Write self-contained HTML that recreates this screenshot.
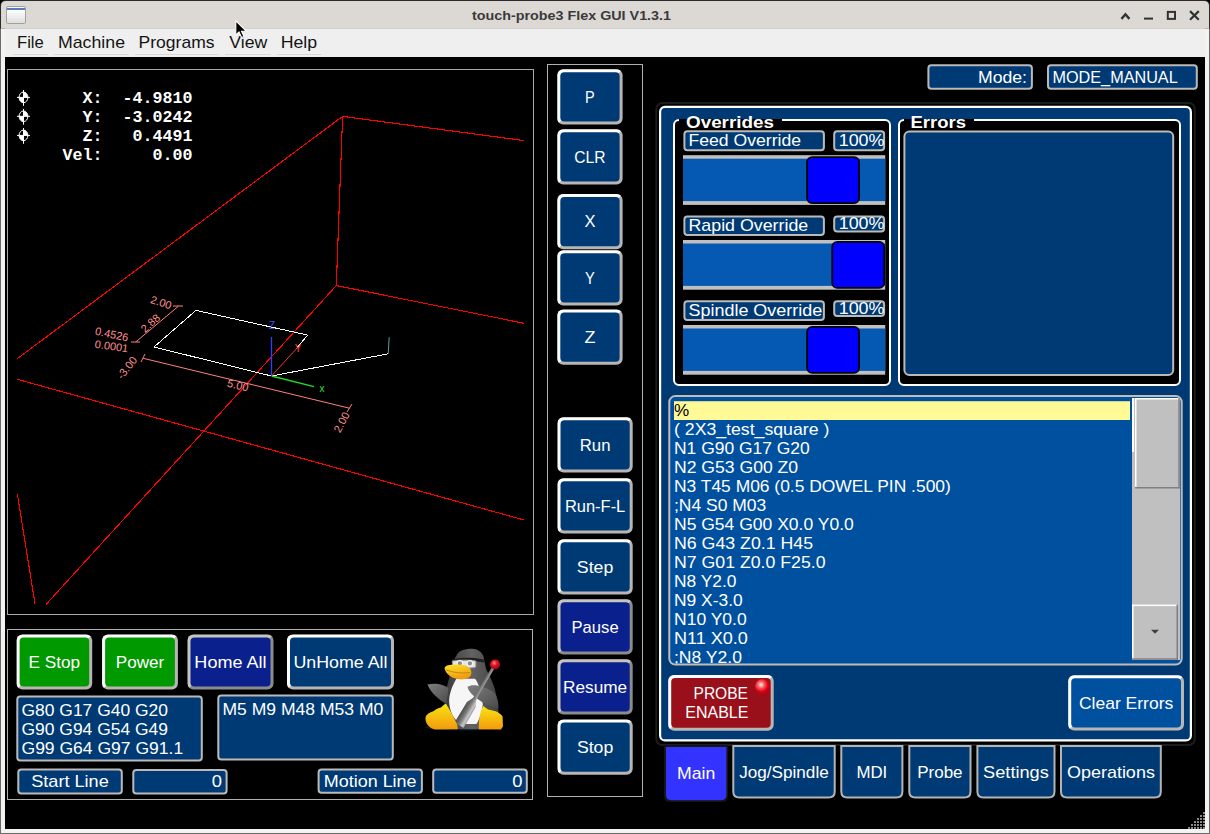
<!DOCTYPE html>
<html><head><meta charset="utf-8"><style>
html,body{margin:0;padding:0;background:#000;overflow:hidden;}
svg{display:block;}
</style></head><body>
<svg width="1210" height="834" viewBox="0 0 1210 834" font-family="Liberation Sans">
<defs>
<linearGradient id="wig" x1="0" y1="0" x2="0" y2="1"><stop offset="0" stop-color="#ffffff"/><stop offset="1" stop-color="#dcdedc"/></linearGradient>
<clipPath id="pclip"><rect x="0" y="0" width="0" height="0"/></clipPath>
</defs>
<rect x="0" y="0" width="1210" height="834" fill="#000"/>
<rect x="0" y="28" width="1210" height="806" fill="#f4f3f2"/>
<rect x="5" y="57" width="1200" height="772" fill="#000"/>
<rect x="1209" y="28" width="1" height="806" fill="#6a6a6a"/>
<rect x="0" y="28" width="1" height="806" fill="#6a6a6a"/>
<rect x="0" y="833" width="1210" height="1" fill="#6a6a6a"/>
<path d="M0,6 Q0,0 6,0 L1204,0 Q1210,0 1210,6 L1210,28.5 L0,28.5 Z" fill="#2a2a2a"/>
<path d="M1,6 Q1,1 6,1 L1204,1 Q1209,1 1209,6 L1209,28.5 L1,28.5 Z" fill="#dcd8d4"/>
<rect x="5" y="28.5" width="1200" height="28.5" fill="#efefef"/>
<rect x="6.5" y="6.5" width="19" height="17" rx="1.5" fill="#f4f4f2" stroke="#a0a0a0" stroke-width="1"/>
<rect x="7" y="8" width="18" height="2" fill="#5a7fb8"/>
<rect x="7" y="10" width="18" height="13" fill="url(#wig)"/>
<text x="571.5" y="19.6" font-family="Liberation Sans" font-size="12.6" font-weight="bold" fill="#3a3a3a" text-anchor="middle" textLength="199.00" lengthAdjust="spacingAndGlyphs" >touch-probe3 Flex GUI V1.3.1</text>
<path d="M1122.2,18 L1125.4,14.3 L1128.6,18" fill="none" stroke="#2e3436" stroke-width="2.4" stroke-linecap="square"/>
<rect x="1144" y="17.6" width="9" height="2" fill="#2e3436"/>
<rect x="1167.8" y="11.9" width="7.2" height="7" fill="none" stroke="#2e3436" stroke-width="2"/>
<path d="M1190.8,11.9 L1198,19 M1198,11.9 L1190.8,19" fill="none" stroke="#2e3436" stroke-width="2.2" stroke-linecap="square"/>
<text x="17" y="47.8" font-family="Liberation Sans" font-size="17.0" font-weight="normal" fill="#141414" text-anchor="start" textLength="26.80" lengthAdjust="spacingAndGlyphs" >File</text>
<rect x="13" y="54" width="35" height="1" fill="#d8d8d8"/>
<text x="58" y="47.8" font-family="Liberation Sans" font-size="17.0" font-weight="normal" fill="#141414" text-anchor="start" textLength="67.00" lengthAdjust="spacingAndGlyphs" >Machine</text>
<rect x="54" y="54" width="74.5" height="1" fill="#d8d8d8"/>
<text x="138.6" y="47.8" font-family="Liberation Sans" font-size="17.0" font-weight="normal" fill="#141414" text-anchor="start" textLength="75.89" lengthAdjust="spacingAndGlyphs" >Programs</text>
<rect x="135" y="54" width="83.5" height="1" fill="#d8d8d8"/>
<text x="229.3" y="47.8" font-family="Liberation Sans" font-size="17.0" font-weight="normal" fill="#141414" text-anchor="start" textLength="38.00" lengthAdjust="spacingAndGlyphs" >View</text>
<rect x="225" y="54" width="45.5" height="1" fill="#d8d8d8"/>
<text x="280.7" y="47.8" font-family="Liberation Sans" font-size="17.0" font-weight="normal" fill="#141414" text-anchor="start" textLength="36.48" lengthAdjust="spacingAndGlyphs" >Help</text>
<rect x="277" y="54" width="44.5" height="1" fill="#d8d8d8"/>
<rect x="7.5" y="69.5" width="526" height="545" fill="#000" stroke="#a8a8a8" stroke-width="1"/>
<line x1="17.3" y1="358.6" x2="342.6" y2="116.4" stroke="#ff0000" stroke-width="1.1" shape-rendering="crispEdges"/>
<line x1="342.6" y1="116.4" x2="524.2" y2="140.6" stroke="#ff0000" stroke-width="1.1" shape-rendering="crispEdges"/>
<line x1="342.6" y1="116.4" x2="336.3" y2="285.6" stroke="#ff0000" stroke-width="1.1" shape-rendering="crispEdges"/>
<line x1="336.3" y1="285.6" x2="524.2" y2="323.3" stroke="#ff0000" stroke-width="1.1" shape-rendering="crispEdges"/>
<line x1="46" y1="604.5" x2="336.3" y2="285.6" stroke="#ff0000" stroke-width="1.1" shape-rendering="crispEdges"/>
<line x1="17.3" y1="379.3" x2="524" y2="520" stroke="#ff0000" stroke-width="1.1" shape-rendering="crispEdges"/>
<line x1="17.3" y1="493.7" x2="35.1" y2="604.5" stroke="#ff0000" stroke-width="1.1" shape-rendering="crispEdges"/>
<polyline points="271.5,376 154,347 195.9,310.4 307.6,335.1 296,349" fill="none" stroke="#ffffff" stroke-width="1" shape-rendering="crispEdges"/>
<polyline points="271.5,376 388.2,353.8" fill="none" stroke="#ffffff" stroke-width="1" shape-rendering="crispEdges"/>
<polyline points="388.2,353.8 389.2,337.3" fill="none" stroke="#6a9a9a" stroke-width="1"/>
<line x1="271.5" y1="376" x2="298" y2="347" stroke="#ff3030" stroke-width="1"/>
<line x1="271.5" y1="376" x2="314" y2="386.7" stroke="#20e020" stroke-width="1.3"/>
<line x1="271.5" y1="376" x2="271.5" y2="337" stroke="#3040ff" stroke-width="1.3"/>
<line x1="143.2" y1="358.3" x2="349.5" y2="408.2" stroke="#ff8080" stroke-width="1"/>
<line x1="141" y1="362" x2="145" y2="354" stroke="#ff8080" stroke-width="1"/>
<line x1="347" y1="412" x2="352" y2="404" stroke="#ff8080" stroke-width="1"/>
<line x1="135.8" y1="341.9" x2="178.4" y2="306.2" stroke="#ff8080" stroke-width="1"/>
<line x1="131" y1="342" x2="140" y2="342" stroke="#ff8080" stroke-width="1"/>
<line x1="173" y1="306" x2="183" y2="306" stroke="#ff8080" stroke-width="1"/>
<g font-family="Liberation Sans" font-size="11" fill="#ff9090">
<text x="237" y="389" transform="rotate(14 237 389)" text-anchor="middle">5.00</text>
<text x="345" y="424" transform="rotate(-62 345 424)" text-anchor="middle">2.00</text>
<text x="160" y="306" transform="rotate(18 160 306)" text-anchor="middle">2.00</text>
<text x="153" y="326" transform="rotate(-42 153 326)" text-anchor="middle">2.88</text>
<text x="130" y="370" transform="rotate(-52 130 370)" text-anchor="middle">-3.00</text>
<text x="111" y="338" transform="rotate(12 111 338)" text-anchor="middle">0.4526</text>
<text x="111" y="350" transform="rotate(8 111 350)" text-anchor="middle">0.0001</text>
</g>
<g font-family="Liberation Sans" font-size="10">
<text x="272" y="329" fill="#4050ff" text-anchor="middle">Z</text>
<text x="322" y="392" fill="#30e030" text-anchor="middle">x</text>
<text x="298" y="352" fill="#ff4040" text-anchor="middle">Y</text>
</g>
<text x="62.5" y="103" font-family="Liberation Mono" font-size="16.8" font-weight="bold" fill="#fff" textLength="130" lengthAdjust="spacingAndGlyphs" xml:space="preserve">  X:  -4.9810</text>
<text x="62.5" y="121.8" font-family="Liberation Mono" font-size="16.8" font-weight="bold" fill="#fff" textLength="130" lengthAdjust="spacingAndGlyphs" xml:space="preserve">  Y:  -3.0242</text>
<text x="62.5" y="140.7" font-family="Liberation Mono" font-size="16.8" font-weight="bold" fill="#fff" textLength="130" lengthAdjust="spacingAndGlyphs" xml:space="preserve">  Z:   0.4491</text>
<text x="62.5" y="159.5" font-family="Liberation Mono" font-size="16.8" font-weight="bold" fill="#fff" textLength="130" lengthAdjust="spacingAndGlyphs" xml:space="preserve">Vel:     0.00</text>
<g transform="translate(23.5 97.4)"><ellipse cx="0" cy="0" rx="4.4" ry="5.3" fill="none" stroke="#fff" stroke-width="1"/><path d="M0,0 L0,-5.3 A4.4,5.3 0 0 1 4.4,0 Z M0,0 L0,5.3 A4.4,5.3 0 0 1 -4.4,0 Z" fill="#fff"/><path d="M-6.5,0 H6.5 M0,-7.4 V8.4" stroke="#fff" stroke-width="1"/></g>
<g transform="translate(23.5 116.3)"><ellipse cx="0" cy="0" rx="4.4" ry="5.3" fill="none" stroke="#fff" stroke-width="1"/><path d="M0,0 L0,-5.3 A4.4,5.3 0 0 1 4.4,0 Z M0,0 L0,5.3 A4.4,5.3 0 0 1 -4.4,0 Z" fill="#fff"/><path d="M-6.5,0 H6.5 M0,-7.4 V8.4" stroke="#fff" stroke-width="1"/></g>
<g transform="translate(23.5 135.4)"><ellipse cx="0" cy="0" rx="4.4" ry="5.3" fill="none" stroke="#fff" stroke-width="1"/><path d="M0,0 L0,-5.3 A4.4,5.3 0 0 1 4.4,0 Z M0,0 L0,5.3 A4.4,5.3 0 0 1 -4.4,0 Z" fill="#fff"/><path d="M-6.5,0 H6.5 M0,-7.4 V8.4" stroke="#fff" stroke-width="1"/></g>
<rect x="7.5" y="629.5" width="525" height="170" fill="none" stroke="#b0b0b0" stroke-width="1"/>
<rect x="16.6" y="634.5" width="75.6" height="55" rx="6" fill="#b8b6b4"/>
<clipPath id="c1"><polygon points="16.6,634.5 92.19999999999999,634.5 64.69999999999999,662.0 44.1,662.0 16.6,689.5"/></clipPath>
<rect x="16.6" y="634.5" width="75.6" height="55" rx="6" fill="#ffffff" clip-path="url(#c1)"/>
<rect x="19.6" y="637.5" width="69.6" height="49" rx="4" fill="#009900"/>
<text x="54.4" y="667.8" font-family="Liberation Sans" font-size="17.0" font-weight="normal" fill="#fff" text-anchor="middle" textLength="51.59" lengthAdjust="spacingAndGlyphs" >E Stop</text>
<rect x="102.1" y="634.5" width="75.8" height="55" rx="6" fill="#b8b6b4"/>
<clipPath id="c2"><polygon points="102.1,634.5 177.89999999999998,634.5 150.39999999999998,662.0 129.6,662.0 102.1,689.5"/></clipPath>
<rect x="102.1" y="634.5" width="75.8" height="55" rx="6" fill="#ffffff" clip-path="url(#c2)"/>
<rect x="105.1" y="637.5" width="69.8" height="49" rx="4" fill="#009900"/>
<text x="140.0" y="667.8" font-family="Liberation Sans" font-size="17.0" font-weight="normal" fill="#fff" text-anchor="middle" textLength="48.41" lengthAdjust="spacingAndGlyphs" >Power</text>
<rect x="187.5" y="634.5" width="86" height="55" rx="6" fill="#8c8c8c"/>
<clipPath id="c3"><polygon points="187.5,634.5 273.5,634.5 246.0,662.0 215.0,662.0 187.5,689.5"/></clipPath>
<rect x="187.5" y="634.5" width="86" height="55" rx="6" fill="#c8c4c0" clip-path="url(#c3)"/>
<rect x="190.5" y="637.5" width="80" height="49" rx="4" fill="#0a208c"/>
<text x="230.5" y="667.8" font-family="Liberation Sans" font-size="17.0" font-weight="normal" fill="#fff" text-anchor="middle" textLength="72.22" lengthAdjust="spacingAndGlyphs" >Home All</text>
<rect x="287" y="634.5" width="107" height="55" rx="6" fill="#b8b6b4"/>
<clipPath id="c4"><polygon points="287,634.5 394,634.5 366.5,662.0 314.5,662.0 287,689.5"/></clipPath>
<rect x="287" y="634.5" width="107" height="55" rx="6" fill="#ffffff" clip-path="url(#c4)"/>
<rect x="290" y="637.5" width="101" height="49" rx="4" fill="#003a74"/>
<text x="340.5" y="667.8" font-family="Liberation Sans" font-size="17.0" font-weight="normal" fill="#fff" text-anchor="middle" textLength="94.08" lengthAdjust="spacingAndGlyphs" >UnHome All</text>
<rect x="17.3" y="696.5" width="184.5" height="64" rx="3" fill="#003a74" stroke="#bcbab8" stroke-width="2"/>
<text x="21.5" y="715.7" font-family="Liberation Sans" font-size="17.0" font-weight="normal" fill="#fff" text-anchor="start" textLength="146.41" lengthAdjust="spacingAndGlyphs" >G80 G17 G40 G20</text>
<text x="21.5" y="734.7" font-family="Liberation Sans" font-size="17.0" font-weight="normal" fill="#fff" text-anchor="start" textLength="146.41" lengthAdjust="spacingAndGlyphs" >G90 G94 G54 G49</text>
<text x="21.5" y="753.7" font-family="Liberation Sans" font-size="17.0" font-weight="normal" fill="#fff" text-anchor="start" textLength="161.69" lengthAdjust="spacingAndGlyphs" >G99 G64 G97 G91.1</text>
<rect x="218.3" y="695.5" width="174.5" height="64" rx="3" fill="#003a74" stroke="#bcbab8" stroke-width="2"/>
<text x="222.5" y="715.3" font-family="Liberation Sans" font-size="17.0" font-weight="normal" fill="#fff" text-anchor="start" textLength="160.75" lengthAdjust="spacingAndGlyphs" >M5 M9 M48 M53 M0</text>
<rect x="18.3" y="769.5" width="103.5" height="24" rx="3" fill="#003a74" stroke="#bcbab8" stroke-width="2"/>
<text x="70" y="786.6" font-family="Liberation Sans" font-size="17.0" font-weight="normal" fill="#fff" text-anchor="middle" textLength="77.56" lengthAdjust="spacingAndGlyphs" >Start Line</text>
<rect x="133.3" y="770.0" width="93.3" height="23.5" rx="3" fill="#003a74" stroke="#bcbab8" stroke-width="2"/>
<text x="222" y="786.6" font-family="Liberation Sans" font-size="17.0" font-weight="normal" fill="#fff" text-anchor="end" textLength="10.19" lengthAdjust="spacingAndGlyphs" >0</text>
<rect x="318.6" y="769.5" width="103.3" height="23.3" rx="3" fill="#003a74" stroke="#bcbab8" stroke-width="2"/>
<text x="370.2" y="786.6" font-family="Liberation Sans" font-size="17.0" font-weight="normal" fill="#fff" text-anchor="middle" textLength="92.73" lengthAdjust="spacingAndGlyphs" >Motion Line</text>
<rect x="433.2" y="769.5" width="93.6" height="23.3" rx="3" fill="#003a74" stroke="#bcbab8" stroke-width="2"/>
<text x="522.5" y="786.6" font-family="Liberation Sans" font-size="17.0" font-weight="normal" fill="#fff" text-anchor="end" textLength="10.19" lengthAdjust="spacingAndGlyphs" >0</text>
<rect x="547.5" y="64.5" width="95" height="732" fill="none" stroke="#b0b0b0" stroke-width="1"/>
<rect x="557.3" y="69.3" width="65.3" height="55.2" rx="6" fill="#b8b6b4"/>
<clipPath id="c5"><polygon points="557.3,69.3 622.5999999999999,69.3 594.9999999999999,96.9 584.9,96.9 557.3,124.5"/></clipPath>
<rect x="557.3" y="69.3" width="65.3" height="55.2" rx="6" fill="#ffffff" clip-path="url(#c5)"/>
<rect x="560.3" y="72.3" width="59.3" height="49.2" rx="4" fill="#003a74"/>
<text x="589.9499999999999" y="102.7" font-family="Liberation Sans" font-size="17.0" font-weight="normal" fill="#fff" text-anchor="middle" textLength="9.66" lengthAdjust="spacingAndGlyphs" >P</text>
<rect x="557.3" y="129.2" width="65.3" height="55.2" rx="6" fill="#b8b6b4"/>
<clipPath id="c6"><polygon points="557.3,129.2 622.5999999999999,129.2 594.9999999999999,156.79999999999998 584.9,156.79999999999998 557.3,184.39999999999998"/></clipPath>
<rect x="557.3" y="129.2" width="65.3" height="55.2" rx="6" fill="#ffffff" clip-path="url(#c6)"/>
<rect x="560.3" y="132.2" width="59.3" height="49.2" rx="4" fill="#003a74"/>
<text x="589.9499999999999" y="162.6" font-family="Liberation Sans" font-size="17.0" font-weight="normal" fill="#fff" text-anchor="middle" textLength="31.22" lengthAdjust="spacingAndGlyphs" >CLR</text>
<rect x="557.3" y="194" width="65.3" height="55.2" rx="6" fill="#b8b6b4"/>
<clipPath id="c7"><polygon points="557.3,194 622.5999999999999,194 594.9999999999999,221.6 584.9,221.6 557.3,249.2"/></clipPath>
<rect x="557.3" y="194" width="65.3" height="55.2" rx="6" fill="#ffffff" clip-path="url(#c7)"/>
<rect x="560.3" y="197" width="59.3" height="49.2" rx="4" fill="#003a74"/>
<text x="589.9499999999999" y="227.4" font-family="Liberation Sans" font-size="17.0" font-weight="normal" fill="#fff" text-anchor="middle" textLength="10.97" lengthAdjust="spacingAndGlyphs" >X</text>
<rect x="557.3" y="250.3" width="65.3" height="55.2" rx="6" fill="#b8b6b4"/>
<clipPath id="c8"><polygon points="557.3,250.3 622.5999999999999,250.3 594.9999999999999,277.90000000000003 584.9,277.90000000000003 557.3,305.5"/></clipPath>
<rect x="557.3" y="250.3" width="65.3" height="55.2" rx="6" fill="#ffffff" clip-path="url(#c8)"/>
<rect x="560.3" y="253.3" width="59.3" height="49.2" rx="4" fill="#003a74"/>
<text x="589.9499999999999" y="283.70000000000005" font-family="Liberation Sans" font-size="17.0" font-weight="normal" fill="#fff" text-anchor="middle" textLength="9.78" lengthAdjust="spacingAndGlyphs" >Y</text>
<rect x="557.3" y="309.5" width="65.3" height="55.2" rx="6" fill="#b8b6b4"/>
<clipPath id="c9"><polygon points="557.3,309.5 622.5999999999999,309.5 594.9999999999999,337.1 584.9,337.1 557.3,364.7"/></clipPath>
<rect x="557.3" y="309.5" width="65.3" height="55.2" rx="6" fill="#ffffff" clip-path="url(#c9)"/>
<rect x="560.3" y="312.5" width="59.3" height="49.2" rx="4" fill="#003a74"/>
<text x="589.9499999999999" y="342.90000000000003" font-family="Liberation Sans" font-size="17.0" font-weight="normal" fill="#fff" text-anchor="middle" textLength="10.97" lengthAdjust="spacingAndGlyphs" >Z</text>
<rect x="557.5" y="417.3" width="75.2" height="55.2" rx="6" fill="#b8b6b4"/>
<clipPath id="c10"><polygon points="557.5,417.3 632.7,417.3 605.1,444.90000000000003 585.1,444.90000000000003 557.5,472.5"/></clipPath>
<rect x="557.5" y="417.3" width="75.2" height="55.2" rx="6" fill="#ffffff" clip-path="url(#c10)"/>
<rect x="560.5" y="420.3" width="69.2" height="49.2" rx="4" fill="#003a74"/>
<text x="595.1" y="450.70000000000005" font-family="Liberation Sans" font-size="17.0" font-weight="normal" fill="#fff" text-anchor="middle" textLength="30.69" lengthAdjust="spacingAndGlyphs" >Run</text>
<rect x="557.5" y="478.3" width="75.2" height="55.2" rx="6" fill="#b8b6b4"/>
<clipPath id="c11"><polygon points="557.5,478.3 632.7,478.3 605.1,505.90000000000003 585.1,505.90000000000003 557.5,533.5"/></clipPath>
<rect x="557.5" y="478.3" width="75.2" height="55.2" rx="6" fill="#ffffff" clip-path="url(#c11)"/>
<rect x="560.5" y="481.3" width="69.2" height="49.2" rx="4" fill="#003a74"/>
<text x="595.1" y="511.70000000000005" font-family="Liberation Sans" font-size="17.0" font-weight="normal" fill="#fff" text-anchor="middle" textLength="60.38" lengthAdjust="spacingAndGlyphs" >Run-F-L</text>
<rect x="557.5" y="539.3" width="75.2" height="55.2" rx="6" fill="#b8b6b4"/>
<clipPath id="c12"><polygon points="557.5,539.3 632.7,539.3 605.1,566.9 585.1,566.9 557.5,594.5"/></clipPath>
<rect x="557.5" y="539.3" width="75.2" height="55.2" rx="6" fill="#ffffff" clip-path="url(#c12)"/>
<rect x="560.5" y="542.3" width="69.2" height="49.2" rx="4" fill="#003a74"/>
<text x="595.1" y="572.6999999999999" font-family="Liberation Sans" font-size="17.0" font-weight="normal" fill="#fff" text-anchor="middle" textLength="36.44" lengthAdjust="spacingAndGlyphs" >Step</text>
<rect x="557.5" y="599.3" width="75.2" height="55.2" rx="6" fill="#8c8c8c"/>
<clipPath id="c13"><polygon points="557.5,599.3 632.7,599.3 605.1,626.9 585.1,626.9 557.5,654.5"/></clipPath>
<rect x="557.5" y="599.3" width="75.2" height="55.2" rx="6" fill="#c8c4c0" clip-path="url(#c13)"/>
<rect x="560.5" y="602.3" width="69.2" height="49.2" rx="4" fill="#0a208c"/>
<text x="595.1" y="632.6999999999999" font-family="Liberation Sans" font-size="17.0" font-weight="normal" fill="#fff" text-anchor="middle" textLength="47.08" lengthAdjust="spacingAndGlyphs" >Pause</text>
<rect x="557.5" y="659.3" width="75.2" height="55.2" rx="6" fill="#8c8c8c"/>
<clipPath id="c14"><polygon points="557.5,659.3 632.7,659.3 605.1,686.9 585.1,686.9 557.5,714.5"/></clipPath>
<rect x="557.5" y="659.3" width="75.2" height="55.2" rx="6" fill="#c8c4c0" clip-path="url(#c14)"/>
<rect x="560.5" y="662.3" width="69.2" height="49.2" rx="4" fill="#0a208c"/>
<text x="595.1" y="692.6999999999999" font-family="Liberation Sans" font-size="17.0" font-weight="normal" fill="#fff" text-anchor="middle" textLength="64.17" lengthAdjust="spacingAndGlyphs" >Resume</text>
<rect x="557.5" y="719.5" width="75.2" height="55.2" rx="6" fill="#b8b6b4"/>
<clipPath id="c15"><polygon points="557.5,719.5 632.7,719.5 605.1,747.1 585.1,747.1 557.5,774.7"/></clipPath>
<rect x="557.5" y="719.5" width="75.2" height="55.2" rx="6" fill="#ffffff" clip-path="url(#c15)"/>
<rect x="560.5" y="722.5" width="69.2" height="49.2" rx="4" fill="#003a74"/>
<text x="595.1" y="752.9" font-family="Liberation Sans" font-size="17.0" font-weight="normal" fill="#fff" text-anchor="middle" textLength="36.39" lengthAdjust="spacingAndGlyphs" >Stop</text>
<rect x="928.4" y="65.3" width="103.5" height="23.5" rx="3" fill="#003a74" stroke="#bcbab8" stroke-width="2"/>
<text x="1027" y="83.2" font-family="Liberation Sans" font-size="17.0" font-weight="normal" fill="#fff" text-anchor="end" textLength="49.00" lengthAdjust="spacingAndGlyphs" >Mode:</text>
<rect x="1048.0" y="65.3" width="148.8" height="23.5" rx="3" fill="#003a74" stroke="#bcbab8" stroke-width="2"/>
<text x="1052.5" y="83.2" font-family="Liberation Sans" font-size="17.0" font-weight="normal" fill="#fff" text-anchor="start" textLength="125.17" lengthAdjust="spacingAndGlyphs" >MODE_MANUAL</text>
<rect x="656.3" y="103" width="538.5" height="642" rx="6" fill="none" stroke="#1c1c1c" stroke-width="2"/>
<rect x="660.1" y="106.9" width="530.8" height="833" rx="5" fill="#003a74" stroke="#fff" stroke-width="2.2" clip-path="url(#pclip)"/>
<rect x="660.1" y="106.9" width="530.8" height="633.5" rx="5" fill="#003a74" stroke="#fff" stroke-width="2.2"/>
<rect x="674" y="120" width="216" height="265" rx="5" fill="#000" stroke="#fff" stroke-width="2"/>
<rect x="679" y="118" width="103" height="4" fill="#000"/>
<rect x="679" y="110" width="103" height="9" fill="#003a74"/>
<text x="686" y="127.5" font-family="Liberation Sans" font-size="17" font-weight="bold" fill="#fff" text-anchor="start" textLength="88.00" lengthAdjust="spacingAndGlyphs" >Overrides</text>
<rect x="899" y="120" width="281" height="265" rx="5" fill="#000" stroke="#fff" stroke-width="2"/>
<rect x="904" y="118" width="70" height="4" fill="#000"/>
<rect x="904" y="110" width="70" height="9" fill="#003a74"/>
<text x="910.5" y="127.5" font-family="Liberation Sans" font-size="17" font-weight="bold" fill="#fff" text-anchor="start" textLength="55.50" lengthAdjust="spacingAndGlyphs" >Errors</text>
<rect x="904.4" y="131.6" width="268.8" height="243.4" rx="5" fill="#003a74" stroke="#bcbab8" stroke-width="2"/>
<rect x="684.4" y="131.2" width="139.5" height="19" rx="3" fill="#003a74" stroke="#bcbab8" stroke-width="2"/>
<text x="688.5" y="145.6" font-family="Liberation Sans" font-size="17.0" font-weight="normal" fill="#fff" text-anchor="start" textLength="112.50" lengthAdjust="spacingAndGlyphs" >Feed Override</text>
<rect x="834.2" y="131.2" width="49.9" height="19" rx="3" fill="#003a74" stroke="#bcbab8" stroke-width="2"/>
<text x="884.5" y="145.89999999999998" font-family="Liberation Sans" font-size="17.0" font-weight="normal" fill="#fff" text-anchor="end" textLength="45.77" lengthAdjust="spacingAndGlyphs" >100%</text>
<rect x="683" y="155.2" width="202.2" height="49.7" fill="#c0c0c0"/>
<rect x="683" y="158.7" width="202.2" height="42.4" fill="#0559b3"/>
<rect x="807.0999999999999" y="157.1" width="52" height="46" rx="5" fill="#0000ff" stroke="#000" stroke-width="1.8"/>
<rect x="684.4" y="216.6" width="139.5" height="18.3" rx="3" fill="#003a74" stroke="#bcbab8" stroke-width="2"/>
<text x="688.5" y="230.65" font-family="Liberation Sans" font-size="17.0" font-weight="normal" fill="#fff" text-anchor="start" textLength="119.69" lengthAdjust="spacingAndGlyphs" >Rapid Override</text>
<rect x="834.2" y="216.6" width="49.9" height="14.8" rx="3" fill="#003a74" stroke="#bcbab8" stroke-width="2"/>
<text x="884.5" y="229.2" font-family="Liberation Sans" font-size="17.0" font-weight="normal" fill="#fff" text-anchor="end" textLength="45.77" lengthAdjust="spacingAndGlyphs" >100%</text>
<rect x="683" y="240" width="202.2" height="49.7" fill="#c0c0c0"/>
<rect x="683" y="243.5" width="202.2" height="42.4" fill="#0559b3"/>
<rect x="832.1999999999999" y="241.9" width="52" height="46" rx="5" fill="#0000ff" stroke="#000" stroke-width="1.8"/>
<rect x="684.4" y="301.3" width="139.5" height="18.6" rx="3" fill="#003a74" stroke="#bcbab8" stroke-width="2"/>
<text x="688.5" y="315.5" font-family="Liberation Sans" font-size="17.0" font-weight="normal" fill="#fff" text-anchor="start" textLength="133.69" lengthAdjust="spacingAndGlyphs" >Spindle Override</text>
<rect x="834.2" y="301.3" width="49.9" height="14.8" rx="3" fill="#003a74" stroke="#bcbab8" stroke-width="2"/>
<text x="884.5" y="313.9" font-family="Liberation Sans" font-size="17.0" font-weight="normal" fill="#fff" text-anchor="end" textLength="45.77" lengthAdjust="spacingAndGlyphs" >100%</text>
<rect x="683" y="325" width="202.2" height="49.7" fill="#c0c0c0"/>
<rect x="683" y="328.5" width="202.2" height="42.4" fill="#0559b3"/>
<rect x="807.0999999999999" y="326.9" width="52" height="46" rx="5" fill="#0000ff" stroke="#000" stroke-width="1.8"/>
<rect x="669.3" y="396.1" width="512.4" height="268.5" rx="6" fill="#0050a0" stroke="#c4bcb4" stroke-width="2"/>
<clipPath id="gclip"><rect x="670.3" y="397.6" width="462" height="266"/></clipPath>
<g clip-path="url(#gclip)">
<rect x="674" y="401.2" width="456" height="18.8" fill="#fffa96"/>
<text x="674" y="415.6" font-family="Liberation Sans" font-size="17.0" font-weight="normal" fill="#000" text-anchor="start" textLength="15.20" lengthAdjust="spacingAndGlyphs" >%</text>
<text x="674" y="434.6" font-family="Liberation Sans" font-size="17.0" font-weight="normal" fill="#fff" text-anchor="start" textLength="155.31" lengthAdjust="spacingAndGlyphs" >( 2X3_test_square )</text>
<text x="674" y="453.6" font-family="Liberation Sans" font-size="17.0" font-weight="normal" fill="#fff" text-anchor="start" textLength="135.78" lengthAdjust="spacingAndGlyphs" >N1 G90 G17 G20</text>
<text x="674" y="472.6" font-family="Liberation Sans" font-size="17.0" font-weight="normal" fill="#fff" text-anchor="start" textLength="124.16" lengthAdjust="spacingAndGlyphs" >N2 G53 G00 Z0</text>
<text x="674" y="491.6" font-family="Liberation Sans" font-size="17.0" font-weight="normal" fill="#fff" text-anchor="start" textLength="276.81" lengthAdjust="spacingAndGlyphs" >N3 T45 M06 (0.5 DOWEL PIN .500)</text>
<text x="674" y="510.6" font-family="Liberation Sans" font-size="17.0" font-weight="normal" fill="#fff" text-anchor="start" textLength="92.27" lengthAdjust="spacingAndGlyphs" >;N4 S0 M03</text>
<text x="674" y="529.6" font-family="Liberation Sans" font-size="17.0" font-weight="normal" fill="#fff" text-anchor="start" textLength="179.78" lengthAdjust="spacingAndGlyphs" >N5 G54 G00 X0.0 Y0.0</text>
<text x="674" y="548.6" font-family="Liberation Sans" font-size="17.0" font-weight="normal" fill="#fff" text-anchor="start" textLength="139.06" lengthAdjust="spacingAndGlyphs" >N6 G43 Z0.1 H45</text>
<text x="674" y="567.6" font-family="Liberation Sans" font-size="17.0" font-weight="normal" fill="#fff" text-anchor="start" textLength="151.52" lengthAdjust="spacingAndGlyphs" >N7 G01 Z0.0 F25.0</text>
<text x="674" y="586.6" font-family="Liberation Sans" font-size="17.0" font-weight="normal" fill="#fff" text-anchor="start" textLength="62.50" lengthAdjust="spacingAndGlyphs" >N8 Y2.0</text>
<text x="674" y="605.6" font-family="Liberation Sans" font-size="17.0" font-weight="normal" fill="#fff" text-anchor="start" textLength="68.67" lengthAdjust="spacingAndGlyphs" >N9 X-3.0</text>
<text x="674" y="624.6" font-family="Liberation Sans" font-size="17.0" font-weight="normal" fill="#fff" text-anchor="start" textLength="72.69" lengthAdjust="spacingAndGlyphs" >N10 Y0.0</text>
<text x="674" y="643.6" font-family="Liberation Sans" font-size="17.0" font-weight="normal" fill="#fff" text-anchor="start" textLength="73.88" lengthAdjust="spacingAndGlyphs" >N11 X0.0</text>
<text x="674" y="662.6" font-family="Liberation Sans" font-size="17.0" font-weight="normal" fill="#fff" text-anchor="start" textLength="67.89" lengthAdjust="spacingAndGlyphs" >;N8 Y2.0</text>
</g>
<rect x="1132" y="398" width="48" height="262" fill="#c0c0c0"/>
<rect x="1132" y="398" width="2" height="54" fill="#fff"/>
<rect x="1135" y="398" width="44.5" height="90.5" fill="#c0c0c0"/>
<rect x="1135" y="398" width="44.5" height="1.5" fill="#fff"/>
<rect x="1135" y="398" width="1.5" height="90" fill="#fff"/>
<rect x="1178.3" y="398" width="1.5" height="90.5" fill="#808080"/>
<rect x="1135" y="487" width="44.5" height="1.5" fill="#808080"/>
<rect x="1132" y="604.6" width="46.5" height="55" fill="#c0c0c0"/>
<rect x="1132" y="604.6" width="46" height="1.5" fill="#fff"/>
<rect x="1132" y="604.6" width="1.5" height="55" fill="#fff"/>
<rect x="1176.5" y="604.6" width="1.5" height="55" fill="#808080"/>
<rect x="1132" y="658.3" width="46" height="1.5" fill="#808080"/>
<polygon points="1151,629.8 1159,629.8 1155,633.8" fill="#404040"/>
<rect x="668.2" y="675" width="105.5" height="55.7" rx="6" fill="#b8b6b4"/>
<clipPath id="c16"><polygon points="668.2,675 773.7,675 745.85,702.85 696.0500000000001,702.85 668.2,730.7"/></clipPath>
<rect x="668.2" y="675" width="105.5" height="55.7" rx="6" fill="#ffffff" clip-path="url(#c16)"/>
<rect x="671.2" y="678" width="99.5" height="49.7" rx="4" fill="#990f1a"/>
<text x="748" y="699" font-family="Liberation Sans" font-size="17.0" font-weight="normal" fill="#fff" text-anchor="end" textLength="54.47" lengthAdjust="spacingAndGlyphs" >PROBE</text>
<text x="685.3" y="717.9" font-family="Liberation Sans" font-size="17.0" font-weight="normal" fill="#fff" text-anchor="start" textLength="63.05" lengthAdjust="spacingAndGlyphs" >ENABLE</text>
<defs><radialGradient id="led" cx="0.4" cy="0.38" r="0.6"><stop offset="0" stop-color="#ffffff"/><stop offset="0.35" stop-color="#ff6060"/><stop offset="0.75" stop-color="#e00010"/><stop offset="1" stop-color="#c00010"/></radialGradient></defs>
<circle cx="762.5" cy="686.6" r="7.6" fill="url(#led)"/>
<rect x="1068.2" y="675.2" width="115.8" height="55.3" rx="6" fill="#b8b6b4"/>
<clipPath id="c17"><polygon points="1068.2,675.2 1184.0,675.2 1156.35,702.85 1095.8500000000001,702.85 1068.2,730.5"/></clipPath>
<rect x="1068.2" y="675.2" width="115.8" height="55.3" rx="6" fill="#ffffff" clip-path="url(#c17)"/>
<rect x="1071.2" y="678.2" width="109.8" height="49.3" rx="4" fill="#0050a0"/>
<text x="1126.1000000000001" y="708.65" font-family="Liberation Sans" font-size="17.0" font-weight="normal" fill="#fff" text-anchor="middle" textLength="94.31" lengthAdjust="spacingAndGlyphs" >Clear Errors</text>
<path d="M664,745 L728,745 L728,796 Q728,802 722,802 L670,802 Q664,802 664,796 Z" fill="#16160f"/>
<path d="M666,747 L726.4,747 L726.4,795 Q726.4,800.2 721,800.2 L671,800.2 Q666,800.2 666,795 Z" fill="#3333ff"/>
<text x="696.2" y="779.1" font-family="Liberation Sans" font-size="17.0" font-weight="normal" fill="#fff" text-anchor="middle" textLength="38.22" lengthAdjust="spacingAndGlyphs" >Main</text>
<path d="M733.3,746 L834.6999999999999,746 L834.6999999999999,791.4 Q834.6999999999999,797.4 828.6999999999999,797.4 L739.3,797.4 Q733.3,797.4 733.3,791.4 Z" fill="#003a74" stroke="#b4b4b4" stroke-width="2"/>
<text x="784.0" y="777.7" font-family="Liberation Sans" font-size="17.0" font-weight="normal" fill="#fff" text-anchor="middle" textLength="89.42" lengthAdjust="spacingAndGlyphs" >Jog/Spindle</text>
<path d="M841.3,746 L902.4,746 L902.4,791.4 Q902.4,797.4 896.4,797.4 L847.3,797.4 Q841.3,797.4 841.3,791.4 Z" fill="#003a74" stroke="#b4b4b4" stroke-width="2"/>
<text x="871.8499999999999" y="777.7" font-family="Liberation Sans" font-size="17.0" font-weight="normal" fill="#fff" text-anchor="middle" textLength="30.86" lengthAdjust="spacingAndGlyphs" >MDI</text>
<path d="M909.3,746 L970.5,746 L970.5,791.4 Q970.5,797.4 964.5,797.4 L915.3,797.4 Q909.3,797.4 909.3,791.4 Z" fill="#003a74" stroke="#b4b4b4" stroke-width="2"/>
<text x="939.9" y="777.7" font-family="Liberation Sans" font-size="17.0" font-weight="normal" fill="#fff" text-anchor="middle" textLength="45.41" lengthAdjust="spacingAndGlyphs" >Probe</text>
<path d="M977.4,746 L1054.5,746 L1054.5,791.4 Q1054.5,797.4 1048.5,797.4 L983.4,797.4 Q977.4,797.4 977.4,791.4 Z" fill="#003a74" stroke="#b4b4b4" stroke-width="2"/>
<text x="1015.9499999999999" y="777.7" font-family="Liberation Sans" font-size="17.0" font-weight="normal" fill="#fff" text-anchor="middle" textLength="65.66" lengthAdjust="spacingAndGlyphs" >Settings</text>
<path d="M1061,746 L1160.8,746 L1160.8,791.4 Q1160.8,797.4 1154.8,797.4 L1067,797.4 Q1061,797.4 1061,791.4 Z" fill="#003a74" stroke="#b4b4b4" stroke-width="2"/>
<text x="1110.9" y="777.7" font-family="Liberation Sans" font-size="17.0" font-weight="normal" fill="#fff" text-anchor="middle" textLength="88.00" lengthAdjust="spacingAndGlyphs" >Operations</text>
<rect x="1203" y="827" width="2" height="2" fill="#8a8a8a"/>
<rect x="1200" y="827" width="2" height="2" fill="#8a8a8a"/>
<rect x="1197" y="827" width="2" height="2" fill="#8a8a8a"/>
<rect x="1194" y="827" width="2" height="2" fill="#8a8a8a"/>
<rect x="1191" y="827" width="2" height="2" fill="#8a8a8a"/>
<rect x="1188" y="827" width="2" height="2" fill="#8a8a8a"/>
<rect x="1203" y="824" width="2" height="2" fill="#8a8a8a"/>
<rect x="1200" y="824" width="2" height="2" fill="#8a8a8a"/>
<rect x="1197" y="824" width="2" height="2" fill="#8a8a8a"/>
<rect x="1194" y="824" width="2" height="2" fill="#8a8a8a"/>
<rect x="1191" y="824" width="2" height="2" fill="#8a8a8a"/>
<rect x="1203" y="821" width="2" height="2" fill="#8a8a8a"/>
<rect x="1200" y="821" width="2" height="2" fill="#8a8a8a"/>
<rect x="1197" y="821" width="2" height="2" fill="#8a8a8a"/>
<rect x="1194" y="821" width="2" height="2" fill="#8a8a8a"/>
<rect x="1203" y="818" width="2" height="2" fill="#8a8a8a"/>
<rect x="1200" y="818" width="2" height="2" fill="#8a8a8a"/>
<rect x="1197" y="818" width="2" height="2" fill="#8a8a8a"/>
<rect x="1203" y="815" width="2" height="2" fill="#8a8a8a"/>
<rect x="1200" y="815" width="2" height="2" fill="#8a8a8a"/>
<rect x="1203" y="812" width="2" height="2" fill="#8a8a8a"/>
<defs>
<linearGradient id="pgBody" x1="0" y1="0" x2="1" y2="0"><stop offset="0" stop-color="#3a3a3a"/><stop offset="0.5" stop-color="#626262"/><stop offset="1" stop-color="#424242"/></linearGradient>
<linearGradient id="pgFoot" x1="0" y1="0" x2="0" y2="1"><stop offset="0" stop-color="#f8e412"/><stop offset="1" stop-color="#f49a0e"/></linearGradient>
<linearGradient id="pgBeak" x1="0" y1="0" x2="0.4" y2="1"><stop offset="0" stop-color="#fbe42a"/><stop offset="1" stop-color="#f39a10"/></linearGradient>
<linearGradient id="pgWing" x1="0" y1="0" x2="1" y2="1"><stop offset="0" stop-color="#808080"/><stop offset="1" stop-color="#4a4a4a"/></linearGradient>
<linearGradient id="pgRod" gradientUnits="userSpaceOnUse" x1="419.5" y1="563.6" x2="488.3" y2="604.4"><stop offset="0" stop-color="#4a4a4a"/><stop offset="0.45" stop-color="#7a7a7a"/><stop offset="0.8" stop-color="#c8c8c8"/><stop offset="1" stop-color="#9a9a9a"/></linearGradient>
<radialGradient id="pgBall" cx="0.42" cy="0.35" r="0.65"><stop offset="0" stop-color="#ff8a8a"/><stop offset="0.4" stop-color="#e01828"/><stop offset="1" stop-color="#a00010"/></radialGradient>
</defs>
<g transform="translate(410 630) scale(0.13187)">
<ellipse cx="410" cy="738" rx="300" ry="24" fill="#0b1822"/>
<path d="M350,200 C365,150 430,143 470,143 C530,146 560,185 562,225 L578,300 C615,370 640,420 655,500 C668,560 676,640 670,700 C660,740 640,752 600,752 L380,752 C320,745 285,720 270,680 C258,620 258,520 275,455 C290,380 318,300 322,240 Z" fill="url(#pgBody)"/>
<path d="M318,224 C380,206 500,206 566,226 L562,246 C500,230 380,230 322,248 Z" fill="#202020"/>
<path d="M320,236 C360,226 470,226 500,236 L499,282 C470,292 360,292 325,282 Z" fill="#e4e4e4" stroke="#909090" stroke-width="7"/>
<circle cx="378" cy="253" r="21" fill="#8c8c8c" stroke="#f4f4f4" stroke-width="9"/>
<circle cx="454" cy="253" r="21" fill="#8c8c8c" stroke="#f4f4f4" stroke-width="9"/>
<path d="M132,413 C200,396 262,418 292,440 L276,560 C220,530 160,480 132,413 Z" fill="url(#pgWing)"/>
<path d="M352,369 C320,420 290,500 298,560 C305,640 350,712 414,712 L504,712 C530,680 548,600 552,565 C545,480 520,400 493,369 Z" fill="#f6f6f6"/>
<path d="M262,290 C266,262 330,258 392,264 C446,270 470,298 464,334 C456,370 412,378 370,374 C318,368 268,332 262,290 Z" fill="url(#pgBeak)"/>
<path d="M272,302 C320,322 400,332 456,322" fill="none" stroke="#b08000" stroke-width="6"/>
<path d="M436,430 C470,405 560,420 630,470 C665,500 674,560 670,592 C620,586 560,560 510,522 C480,497 445,470 436,430 Z" fill="url(#pgWing)"/>
<polygon points="621.9,279.4 493.6,495.6 512.5,506.8 640.8,290.6" fill="url(#pgRod)"/>
<polygon points="498.2,485.9 476.5,516.5 432.1,546.2 337.6,701.6 406.4,742.4 497.5,585.0 502.3,531.9 518.8,498.1" fill="url(#pgRod)"/>
<circle cx="645" cy="262" r="38" fill="url(#pgBall)"/>
<path d="M118,661 C122,640 150,625 177,616 C200,600 215,590 234,588 C250,575 262,562 273,560 C300,600 330,660 358,717 L363,752 L190,754 C140,742 112,700 118,661 Z" fill="url(#pgFoot)"/>
<path d="M522,752 C518,700 530,620 555,576 C575,590 585,600 600,605 C625,610 645,615 663,622 C680,635 698,645 702,656 L705,729 L690,754 Z" fill="url(#pgFoot)"/>
</g>
<path d="M235.8,20.8 L235.8,35.2 L239,32 L241.6,37.4 L244,36.4 L241.5,31.2 L246.2,31.2 Z" fill="#000" stroke="#fff" stroke-width="1.1" stroke-linejoin="miter"/>
</svg>
</body></html>
